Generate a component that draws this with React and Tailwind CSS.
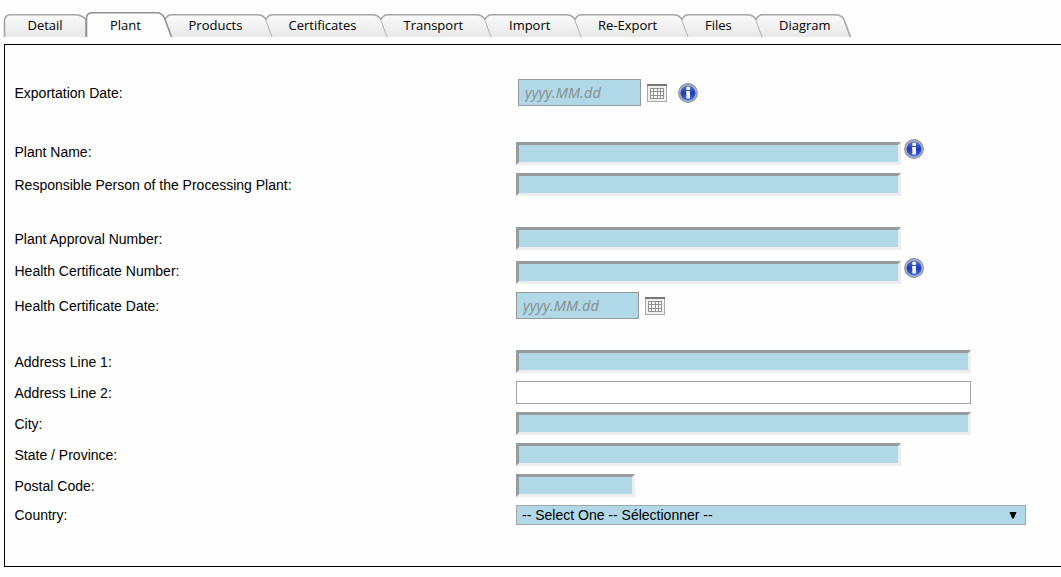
const tabs = [
  { name: 'Detail', width: 82, pad: 'pl-[23.5px]' },
  { name: 'Plant', width: 86, pad: 'pl-6', active: true },
  { name: 'Products', width: 101, pad: 'pl-[16.5px]' },
  { name: 'Certificates', width: 115, pad: 'pl-[15.5px]' },
  { name: 'Transport', width: 104, pad: 'pl-[15.5px]' },
  { name: 'Import', width: 90, pad: 'pl-[17px]' },
  { name: 'Re-Export', width: 107, pad: 'pl-4' },
  { name: 'Files', width: 74, pad: 'pl-4' },
  { name: 'Diagram', width: 88, pad: 'pl-4' },
];

function tabOutline(tab, first) {
  const w = tab.width;
  if (first) return `M0.5 25V9Q0.5 2.7 7 2.7H${w - 11}Q${w - 4} 2.7 ${w} 7.5V25`;
  if (tab.active) return `M0.5 25V6Q0.5 0.8 7 0.8H${w - 15.5}Q${w - 10} 0.8 ${w - 7.5} 6L${w - 0.5} 25`;
  return `M-7 7.5Q-4.5 2.7 -0.5 2.7H${w - 16.5}Q${w - 9.5} 2.7 ${w - 7} 7.5L${w - 0.5} 25`;
}

function tabFill(tab, first) {
  const outline = tabOutline(tab, first);
  return first || tab.active ? outline + 'Z' : outline + 'H-0.5Z';
}

function Tab({ tab, first }) {
  return (
    <div className={`relative h-[25px] ${tab.active ? 'z-10' : ''}`} style={{ width: tab.width }}>
      <svg className="absolute inset-0 overflow-visible" width={tab.width} height="25">
        <defs>
          <linearGradient id="tabGradient" x1="0" y1="2" x2="0" y2="25" gradientUnits="userSpaceOnUse">
            <stop offset="0" stopColor="#fbfbfb" />
            <stop offset="1" stopColor="#e8e8e8" />
          </linearGradient>
          <clipPath id="tabClip">
            <rect x="-10" y="-1" width="140" height="26" />
          </clipPath>
        </defs>
        <g clipPath="url(#tabClip)">
          <path d={tabFill(tab, first)} fill={tab.active ? '#fefefe' : 'url(#tabGradient)'} />
          <path d={tabOutline(tab, first)} fill="none" stroke={tab.active ? '#909090' : '#a4a4a4'} strokeWidth="1.6" />
        </g>
      </svg>
      <span className={`relative block pt-1 font-['Open_Sans',sans-serif] text-[13px] leading-[18px] whitespace-nowrap ${tab.pad}`}>
        {tab.name}
      </span>
    </div>
  );
}

function CalendarIcon() {
  return (
    <svg className="block shrink-0" width="20" height="18" viewBox="0 0 20 18">
      <rect x="0.5" y="0.5" width="19" height="17" fill="#f1f1f1" stroke="#a9a9a9" />
      <path d="M0 1H20" stroke="#777" strokeWidth="2" />
      <rect x="3" y="4" width="14" height="11" fill="#929292" />
      <path
        d="M4 5h2v2H4zM7 5h3v2H7zM11 5h2v2h-2zM14 5h2v2h-2zM4 8h2v3H4zM7 8h3v3H7zM11 8h2v3h-2zM14 8h2v3h-2zM4 12h2v2H4zM7 12h3v2H7zM11 12h2v2h-2zM14 12h2v2h-2z"
        fill="#fafafa"
      />
    </svg>
  );
}

function InfoIcon() {
  return (
    <svg className="block shrink-0" width="20" height="20" viewBox="0 0 20 20">
      <defs>
        <linearGradient id="infoBlue" x1="0" y1="0" x2="0" y2="1">
          <stop offset="0" stopColor="#5b78d0" />
          <stop offset="0.5" stopColor="#1c3bb2" />
          <stop offset="1" stopColor="#4470e6" />
        </linearGradient>
      </defs>
      <circle cx="10" cy="10" r="9.3" fill="#b0b8ca" stroke="#8c909b" strokeWidth="1.2" />
      <circle cx="10" cy="10" r="7.5" fill="url(#infoBlue)" />
      <rect x="8.3" y="3.8" width="3.7" height="3.1" rx="1" fill="#fff" />
      <path d="M8 8h4v7.4H8.3V9.6H8z" fill="#f4f6ff" />
    </svg>
  );
}

function DateField({ inset }) {
  return (
    <div className={`flex items-center gap-1.5 ${inset ? 'ml-0.5' : ''}`}>
      <input
        placeholder="yyyy.MM.dd"
        className="h-[27px] w-[123px] border border-[#999] bg-[#b0d8e6] pl-1.5 font-['Open_Sans',sans-serif] text-[14.5px] tracking-[0.1px] italic outline-none placeholder:text-[#868e91]"
      />
      <CalendarIcon />
    </div>
  );
}

function TextField({ width }) {
  return (
    <input
      className="block h-[23px] border-3 border-t-[#979b9d] border-r-[#ededed] border-b-[#ededed] border-l-[#979b9d] bg-[#b0d8e6] outline-none"
      style={{ width }}
    />
  );
}

function Row({ label, className = '', labelClass = '', children }) {
  return (
    <div className={`flex items-center ${className}`}>
      <label className={`w-[501.5px] shrink-0 text-[14px] leading-4 ${labelClass}`}>{label}</label>
      {children}
    </div>
  );
}

function App() {
  return (
    <div className="h-[577px] w-[1061px] overflow-hidden bg-[#fefefe] pt-3 pl-1 font-['Liberation_Sans',Arial,sans-serif] text-black">
      <div className="flex">
        {tabs.map((tab, i) => (
          <Tab key={tab.name} tab={tab} first={i === 0} />
        ))}
      </div>

      <div className="mt-[7px] h-[523px] w-[1070px] border border-black pt-[34px] pl-[9.5px]">
        <Row label="Exportation Date:" className="h-[27px]">
          <DateField inset />
          <div className="ml-[11px]">
            <InfoIcon />
          </div>
        </Row>

        <Row label="Plant Name:" className="mt-9 h-[23px]" labelClass="pb-[3px]">
          <TextField width={385} />
          <div className="ml-[3px] pb-[9px]">
            <InfoIcon />
          </div>
        </Row>
        <Row label="Responsible Person of the Processing Plant:" className="mt-2 h-[23px]">
          <TextField width={385} />
        </Row>

        <Row label="Plant Approval Number:" className="mt-[31px] h-[23px]">
          <TextField width={385} />
        </Row>
        <Row label="Health Certificate Number:" className="mt-[11px] h-[23px]" labelClass="pb-[3px]">
          <TextField width={385} />
          <div className="ml-[3px] pb-[9px]">
            <InfoIcon />
          </div>
        </Row>
        <Row label="Health Certificate Date:" className="mt-2 h-[27px]">
          <DateField />
        </Row>

        <Row label="Address Line 1:" className="mt-[31px] h-[23px]">
          <TextField width={455} />
        </Row>
        <Row label="Address Line 2:" className="mt-2 h-[23px]">
          <input className="block h-[23px] w-[455px] border border-[#a3a3a6] bg-white outline-none" />
        </Row>
        <Row label="City:" className="mt-2 h-[23px]">
          <TextField width={455} />
        </Row>
        <Row label="State / Province:" className="mt-2 h-[23px]">
          <TextField width={385} />
        </Row>
        <Row label="Postal Code:" className="mt-2 h-[23px]">
          <TextField width={119} />
        </Row>
        <Row label="Country:" className="mt-2 h-5">
          <button className="flex h-5 w-[510px] items-center justify-between border border-[#a3a7a9] bg-[#b0d8e6] pr-2 pl-[5px] text-[14px] leading-4">
            <span>-- Select One -- Sélectionner --</span>
            <svg width="8" height="7" viewBox="0 0 8 7">
              <path d="M0.5 0H7.5L4.8 6.5H3.2Z" fill="#000" />
            </svg>
          </button>
        </Row>
      </div>
    </div>
  );
}

export default App;
